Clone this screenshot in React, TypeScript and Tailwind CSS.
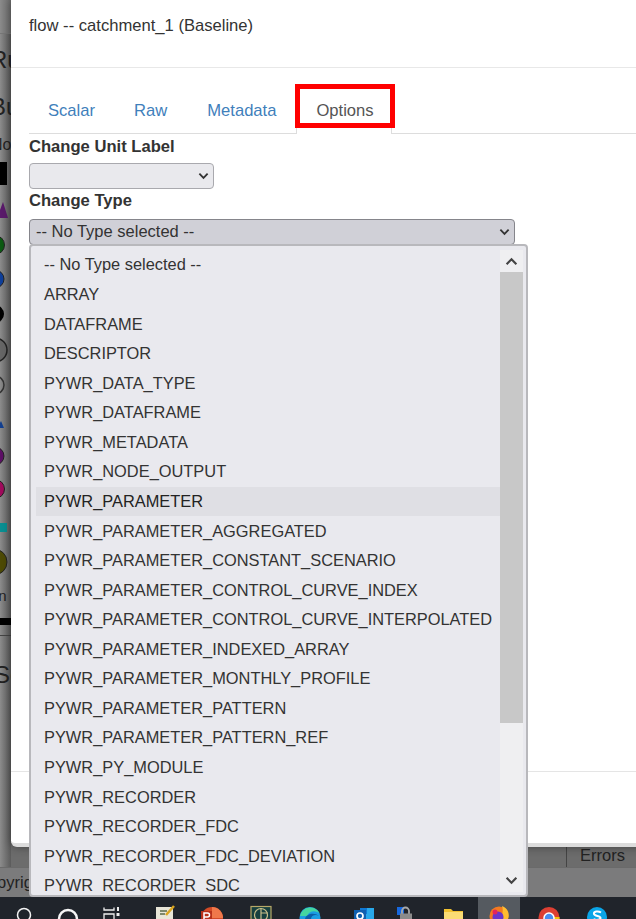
const rows = [
  "-- No Type selected --",
  "ARRAY",
  "DATAFRAME",
  "DESCRIPTOR",
  "PYWR_DATA_TYPE",
  "PYWR_DATAFRAME",
  "PYWR_METADATA",
  "PYWR_NODE_OUTPUT",
  "PYWR_PARAMETER",
  "PYWR_PARAMETER_AGGREGATED",
  "PYWR_PARAMETER_CONSTANT_SCENARIO",
  "PYWR_PARAMETER_CONTROL_CURVE_INDEX",
  "PYWR_PARAMETER_CONTROL_CURVE_INTERPOLATED",
  "PYWR_PARAMETER_INDEXED_ARRAY",
  "PYWR_PARAMETER_MONTHLY_PROFILE",
  "PYWR_PARAMETER_PATTERN",
  "PYWR_PARAMETER_PATTERN_REF",
  "PYWR_PY_MODULE",
  "PYWR_RECORDER",
  "PYWR_RECORDER_FDC",
  "PYWR_RECORDER_FDC_DEVIATION",
  "PYWR_RECORDER_SDC",
];

function Chevron({ up = false, className = "" }: { up?: boolean; className?: string }) {
  return (
    <svg viewBox="0 0 12 8" className={className} fill="none" stroke="currentColor" strokeWidth="2">
      <path d={up ? "M1.5 6.5 L6 2 L10.5 6.5" : "M1.5 1.5 L6 6 L10.5 1.5"} />
    </svg>
  );
}

function Palette() {
  return (
    <svg width="11" height="430" viewBox="0 165 11 430" className="block shrink-0">
      <rect x="0" y="172" width="7" height="23" fill="#000" />
      <path d="M-3 228 L3 212 L8 228 Z" fill="#5a1a6b" />
      <circle cx="-5" cy="255" r="9.5" fill="#0c5a12" stroke="#222" />
      <circle cx="-5" cy="289" r="9" fill="#0f3f9a" stroke="#222" />
      <circle cx="-5" cy="324" r="9" fill="#000" />
      <circle cx="-5" cy="360" r="12" fill="#666" stroke="#222" strokeWidth="1.5" />
      <circle cx="-5" cy="395" r="9" fill="none" stroke="#333" strokeWidth="1.5" />
      <path d="M-3 438 L1 431 L4 438 Z" fill="#123f8f" />
      <circle cx="-5" cy="466" r="9" fill="#5d0f66" stroke="#222" />
      <circle cx="-5" cy="499" r="9.5" fill="#a00a5c" stroke="#222" />
      <rect x="0" y="533" width="7" height="9" fill="#0a8f92" />
      <circle cx="-6" cy="572" r="13" fill="#4d4a05" stroke="#222" />
    </svg>
  );
}

function TaskIcon({ ml, children }: { ml: string; children: React.ReactNode }) {
  return (
    <svg width="36" height="22" viewBox="0 0 36 22" className={`block shrink-0 ${ml}`}>
      {children}
    </svg>
  );
}

function Taskbar() {
  return (
    <div className="flex h-[22px] shrink-0 overflow-hidden bg-[#20242b]">
      <TaskIcon ml="ml-[6px]">
        <circle cx="18" cy="18" r="6.5" fill="none" stroke="#f2f2f2" strokeWidth="1.5" />
      </TaskIcon>
      <TaskIcon ml="ml-[8px]">
        <circle cx="18" cy="22" r="9" fill="none" stroke="#f5f5f5" strokeWidth="2.5" />
      </TaskIcon>
      <TaskIcon ml="ml-[7px]">
        <path d="M11 10.5 V13 H21 V10.5 M11 22 V17 H21 V22" fill="none" stroke="#eee" strokeWidth="1.3" />
        <rect x="24" y="10" width="2" height="4" fill="#eee" />
        <rect x="23.5" y="16" width="3" height="3" fill="#eee" />
      </TaskIcon>
      <TaskIcon ml="ml-[18px]">
        <rect x="9" y="10" width="17" height="12" fill="#e8e6d8" />
        <path d="M13 14 H20 M13 17 H18" stroke="#5a6a4a" strokeWidth="1.5" />
        <path d="M19 18 L27 9" stroke="#d9a520" strokeWidth="2.5" />
      </TaskIcon>
      <TaskIcon ml="ml-[11px]">
        <circle cx="18" cy="21" r="11" fill="#d24a26" />
        <path d="M18 10 A11 11 0 0 1 29 21 H18 Z" fill="#f0784a" />
        <rect x="7" y="14" width="11" height="8" fill="#b7321a" />
        <path d="M10 22 V16 H13.5 A2 2 0 0 1 13.5 20 H10" fill="none" stroke="#fff" strokeWidth="1.5" />
      </TaskIcon>
      <TaskIcon ml="ml-[13px]">
        <rect x="8" y="9.5" width="20" height="13" fill="#17403f" stroke="#b8a868" strokeWidth="1.2" />
        <circle cx="18" cy="18" r="6.5" fill="none" stroke="#c9bf8a" strokeWidth="1.2" />
        <path d="M18 11 V22 M18 16 H25" stroke="#c9bf8a" strokeWidth="1.2" />
      </TaskIcon>
      <TaskIcon ml="ml-[13px]">
        <circle cx="18" cy="20.5" r="10.5" fill="#1b9de2" />
        <path d="M8 19 A10.5 10.5 0 0 1 28 17 C25 13 17 13 15 19 Z" fill="#45d6a0" />
        <path d="M13 22 C14 17 22 15 27 19 C24 17 19 18 19 22 Z" fill="#0c5fa8" />
      </TaskIcon>
      <TaskIcon ml="ml-[17px]">
        <rect x="15" y="11" width="14" height="11" fill="#28a8ea" />
        <rect x="15" y="11" width="7" height="6" fill="#0f78d4" />
        <rect x="9" y="13" width="12" height="9" fill="#0f5fb0" />
        <circle cx="15" cy="19" r="3" fill="none" stroke="#fff" strokeWidth="1.7" />
      </TaskIcon>
      <TaskIcon ml="ml-[6px]">
        <rect x="10" y="10" width="7" height="8" fill="#1668e0" />
        <path d="M15 17 V14 A3.5 3.5 0 0 1 22 14 V17" fill="none" stroke="#a8a8a8" strokeWidth="1.8" />
        <rect x="13" y="16.5" width="12" height="6" fill="#8b8b8b" />
      </TaskIcon>
      <TaskIcon ml="ml-[12px]">
        <path d="M9 12 H16 L18 14 H28 V22 H9 Z" fill="#f2c230" />
        <rect x="9" y="15" width="19" height="7" fill="#fbdc74" />
      </TaskIcon>
      <div className="ml-[7px] flex w-[42px] shrink-0 justify-center bg-[#555a60]">
        <TaskIcon ml="">
          <circle cx="18" cy="19" r="9.5" fill="#f37a1f" />
          <path d="M21 9 C27 11 29 17 27 22 H16 C21 21 23 15 21 9 Z" fill="#ffbd30" />
          <circle cx="17" cy="20" r="5.5" fill="#6a36c9" />
          <circle cx="14" cy="15" r="2.5" fill="#e2265c" />
        </TaskIcon>
      </div>
      <TaskIcon ml="ml-[11px]">
        <circle cx="18" cy="20.5" r="10.5" fill="#dd3f33" />
        <path d="M8 22 H18 V31 H8 Z" fill="#2ba24c" />
        <path d="M18 20 H28.5 V31 H18 Z" fill="#f4c20d" />
        <circle cx="18" cy="21" r="5" fill="#4a8cf0" stroke="#fff" strokeWidth="1.5" />
      </TaskIcon>
      <TaskIcon ml="ml-[12px]">
        <circle cx="18" cy="20" r="10" fill="#0aa5e8" />
        <path d="M22 15.5 C19 13.5 14.5 14.5 15 17 C15.5 19.5 21.5 18.5 21.5 21 C21.5 23 17 23.5 14.5 22" fill="none" stroke="#fff" strokeWidth="2" />
      </TaskIcon>
    </div>
  );
}

function Backdrop() {
  return (
    <div className="flex min-h-0 flex-1 flex-col overflow-hidden bg-[#7b7b7c]">
      <div className="flex h-[868px] shrink-0 border-b border-[#6a6a6a] bg-[#6c6c6c]">
        <div className="flex w-[11px] shrink-0 flex-col overflow-hidden bg-gradient-to-r from-[#8c8c8c] to-[#5b5b5b] font-['Liberation_Sans',sans-serif] text-[#222]">
          <div className="h-[34px] shrink-0 border-b border-[#777] bg-[#8a8a8a]/40" />
          <div className="mt-[12px] -ml-[10px] h-[28px] shrink-0 whitespace-nowrap text-[24px] leading-[28px]">Ru</div>
          <div className="mt-[19px] -ml-[10px] h-[28px] shrink-0 whitespace-nowrap text-[24px] leading-[28px]">Bu</div>
          <div className="mt-[14px] -ml-[9px] h-[20px] shrink-0 whitespace-nowrap text-[16px] leading-[20px]">No</div>
          <Palette />
          <div className="-ml-[5px] mt-[1px] h-[20px] shrink-0 whitespace-nowrap text-[15px] leading-[20px]">in</div>
          <div className="mt-[12px] h-[7px] shrink-0 bg-black" />
          <div className="mt-[10px] h-px shrink-0 bg-[#444]" />
          <div className="mt-[25px] -ml-[6px] h-[28px] shrink-0 whitespace-nowrap text-[24px] leading-[28px]">Se</div>
        </div>
        <div className="flex flex-1 items-end justify-end">
          <div className="mr-[11px] h-[21px] whitespace-nowrap border-l border-[#444] pl-[13px] font-['Liberation_Sans',sans-serif] text-[16.5px] leading-[18px] text-[#222]">
            Errors
          </div>
        </div>
      </div>
      <div className="-ml-[24px] whitespace-nowrap pt-[5px] font-['Liberation_Sans',sans-serif] text-[16.5px] leading-[18px] text-[#222]">
        Copyright
      </div>
    </div>
  );
}

function Modal() {
  return (
    <div className="absolute top-0 left-[11px] flex h-[847px] w-[640px] flex-col rounded-bl-[6px] border-b-4 border-[#dcdcdc] bg-white font-['Liberation_Sans',sans-serif] text-[16.6px] text-[#333] shadow-[0_0_10px_rgba(0,0,0,0.4)]">
      <div className="h-[68px] shrink-0 border-b border-[#e8e8e8] pt-[17px] pl-[18px] leading-[18px]">
        flow -- catchment_1 (Baseline)
      </div>
      <div className="flex-1 pl-[18px]">
        <div className="flex h-[66px] items-end border-b border-[#dddddd] leading-[18px] text-[#3f80bb]">
          <div className="px-[19px] pb-[13px]">Scalar</div>
          <div className="ml-[1px] px-[19px] pb-[13px]">Raw</div>
          <div className="ml-[2px] px-[19px] pb-[13px]">Metadata</div>
          <div className="relative -mb-px ml-[1px] h-[40px] w-[96px] border-x border-[#dddddd] bg-white pt-[8px] pl-[19px] text-[#555]">
            Options
          </div>
        </div>
        <div className="mt-[3px] font-bold leading-[20px]">Change Unit Label</div>
        <div className="mt-[6px] flex h-[26px] w-[185px] items-center justify-end rounded-[4px] border border-[#a9a9ae] bg-[#e9e9ed] pr-[4px] text-[#333]">
          <Chevron className="h-[8px] w-[11px]" />
        </div>
        <div className="mt-[2px] font-bold leading-[20px]">Change Type</div>
        <div className="mt-[8px] flex h-[26px] w-[486px] items-center justify-between rounded-[4px] border border-[#85858b] bg-[#d0d0d7] pb-[1px] pl-[6px] pr-[4px] text-[16.5px] text-[#333]">
          <span>-- No Type selected --</span>
          <Chevron className="h-[8px] w-[11px]" />
        </div>
      </div>
      <div className="h-[72px] shrink-0 border-t border-[#e5e5e5]" />
    </div>
  );
}

function Dropdown() {
  return (
    <div className="absolute top-[244px] left-[29px] flex h-[653px] w-[499px] overflow-hidden rounded-[4px] border-2 border-[#b8b8bc] bg-[#e9e9ee] font-['Liberation_Sans',sans-serif] text-[16.4px] text-[#333]">
      <div className="mb-[3px] min-w-0 flex-1 overflow-hidden pt-[4px] pl-[5px]">
        {rows.map((r) => (
          <div
            key={r}
            className={`flex h-[29.57px] items-center pl-[8px] whitespace-nowrap ${
              r === "PYWR_PARAMETER" ? "bg-[#dfdfe4] text-[#222]" : ""
            }`}
          >
            {r}
          </div>
        ))}
      </div>
      <div className="mt-[4px] mr-[3px] mb-[3px] flex w-[23px] shrink-0 flex-col bg-[#efeff1]">
        <div className="flex h-[22px] shrink-0 items-center justify-center text-[#444]">
          <Chevron up className="h-[9px] w-[13px]" />
        </div>
        <div className="h-[451px] shrink-0 bg-[#c8c8c8]" />
        <div className="flex-1" />
        <div className="flex h-[24px] shrink-0 items-center justify-center text-[#444]">
          <Chevron className="h-[9px] w-[13px]" />
        </div>
      </div>
    </div>
  );
}

export default function App() {
  return (
    <div className="relative flex h-[919px] w-[636px] flex-col overflow-hidden">
      <Backdrop />
      <Taskbar />
      <Modal />
      <Dropdown />
      <div className="absolute top-[84px] left-[295px] h-[44px] w-[100px] border-[5px] border-[#ff0000]" />
    </div>
  );
}
